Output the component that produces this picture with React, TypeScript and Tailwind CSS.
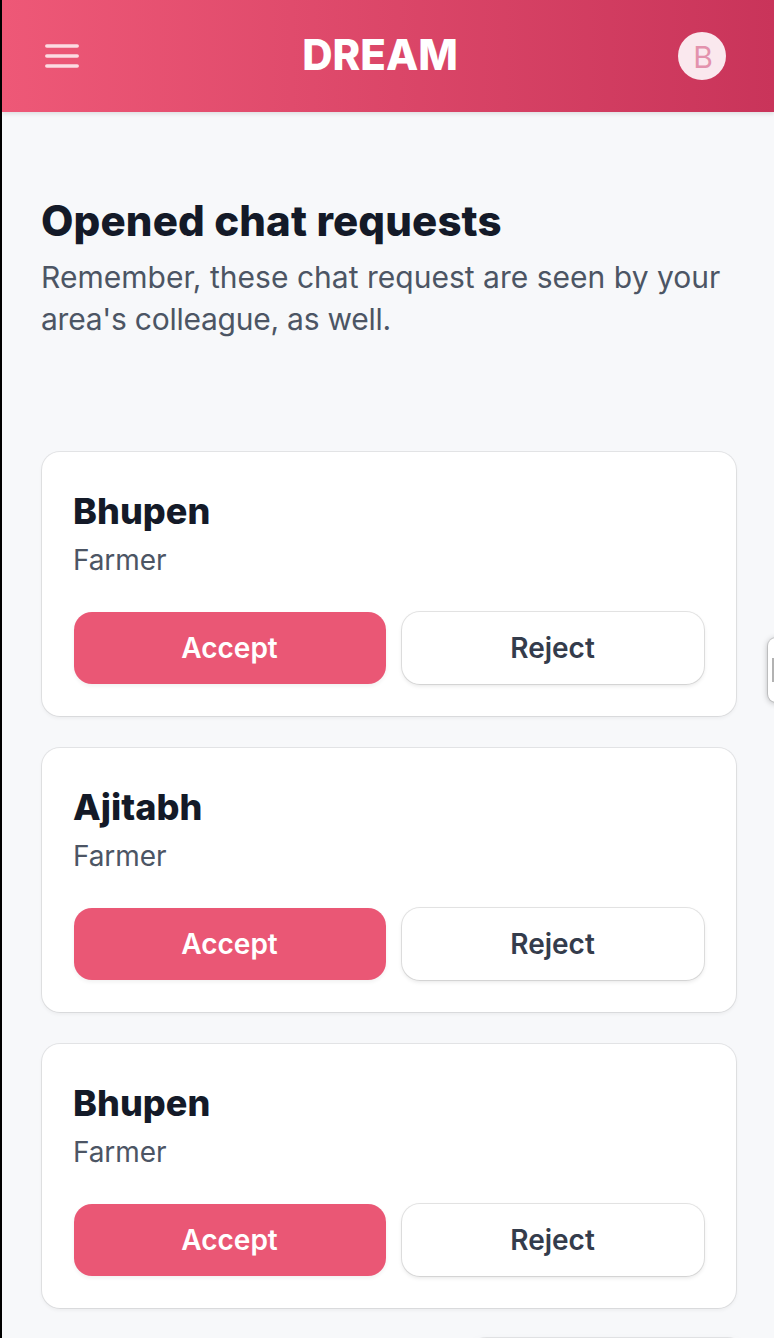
const requests = [
  { id: 1, name: "Bhupen", role: "Farmer" },
  { id: 2, name: "Ajitabh", role: "Farmer" },
  { id: 3, name: "Bhupen", role: "Farmer" },
];

function RequestCard({ name, role }: { name: string; role: string }) {
  return (
    <article className="h-[264px] rounded-[18px] bg-white px-8 pt-[35px] shadow-[0_0_0_1px_rgba(0,0,0,0.08),0_2px_4px_rgba(0,0,0,0.06)]">
      <h2 className="-ml-px h-12 whitespace-nowrap text-[36px] leading-[48px] font-extrabold tracking-[0.05px] text-[#141a28]">{name}</h2>
      <p className="mt-[5px] -ml-px h-10 text-[28px] leading-[40px] tracking-[-0.1px] text-[#4c5564]">{role}</p>
      <div className="mt-8 flex gap-4">
        <button className="h-[72px] w-[312px] rounded-[18px] bg-[#ea5775] pr-px text-[28px] font-semibold text-white shadow-[0_2px_4px_rgba(0,0,0,0.06)]">
          Accept
        </button>
        <button className="h-[72px] w-[302px] rounded-[18px] bg-white pr-px text-[28px] font-semibold text-[#343c4c] shadow-[0_0_0_1px_rgba(0,0,0,0.1),0_2px_4px_rgba(0,0,0,0.1)]">
          Reject
        </button>
      </div>
    </article>
  );
}

export default function App() {
  return (
    <div className="relative h-[1338px] w-[774px] overflow-hidden border-l-2 border-black bg-[#f7f8fa] font-['Inter',sans-serif]">
      <header className="relative flex h-28 items-center justify-between bg-linear-to-r from-[#ee5877] to-[#c9345a] pr-12 pl-9 shadow-[0_2px_4px_rgba(0,0,0,0.1)]">
        <button aria-label="Open menu">
          <svg className="h-12 w-12" viewBox="0 0 48 48" fill="none" stroke="#fcdbe2" strokeWidth="3.5" strokeLinecap="round">
            <path d="M8.8 14h30.4M8.8 24h30.4M8.8 34h30.4" />
          </svg>
        </button>
        <h1 className="mr-1 pb-0.5 text-[42px] leading-[48px] font-extrabold text-white">DREAM</h1>
        <div className="flex h-12 w-12 items-center justify-center rounded-full bg-[#fae8ee] pt-0.5 pl-0.5 text-[30px] text-[#e392ad]">B</div>
      </header>

      <main className="px-10 pt-[83px]">
        <section className="-ml-px h-[257px]">
          <h2 className="h-[52px] whitespace-nowrap text-[42px] leading-[52px] font-extrabold tracking-[0.12px] text-[#141a28]">Opened chat requests</h2>
          <p className="mt-[9px] whitespace-nowrap text-[30px] leading-[42px] text-[#4c5564]">
            <span className="tracking-[0.02px]">Remember, these chat request are seen by your</span>
            <br />
            <span className="tracking-[-0.25px]">area's colleague, as well.</span>
          </p>
        </section>
        <div className="flex w-[694px] flex-col gap-8">
          {requests.map((r) => (
            <RequestCard key={r.id} name={r.name} role={r.role} />
          ))}
        </div>
      </main>

      <div className="absolute top-[1338px] left-[466px] h-16 w-[278px] rounded-[18px] bg-white shadow-[0_0_0_1px_rgba(0,0,0,0.08),0_4px_12px_rgba(0,0,0,0.06)]" />
      <div className="absolute top-[638px] left-[766px] flex h-16 w-6 items-center rounded-lg bg-white pl-1 shadow-[0_0_0_1px_rgba(0,0,0,0.12),0_1px_6px_rgba(0,0,0,0.3)]">
        <div className="h-6 w-3 bg-[#b2b2b2]" />
      </div>
    </div>
  );
}
